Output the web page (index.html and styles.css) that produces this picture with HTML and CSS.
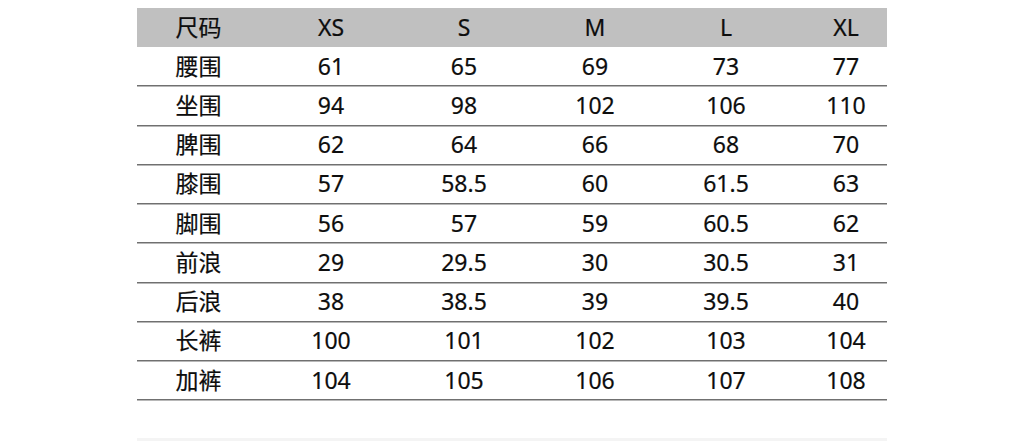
FILE: index.html
```html
<!DOCTYPE html>
<html lang="zh">
<head>
<meta charset="utf-8">
<link rel="stylesheet" href="styles.css">
</head>
<body>
<div class="sheet">
  <div class="table">
    <div class="row head"><div class="cell">尺码</div><div class="cell">XS</div><div class="cell">S</div><div class="cell">M</div><div class="cell">L</div><div class="cell">XL</div></div>
    <div class="row"><div class="cell">腰围</div><div class="cell">61</div><div class="cell">65</div><div class="cell">69</div><div class="cell">73</div><div class="cell">77</div></div>
    <div class="row"><div class="cell">坐围</div><div class="cell">94</div><div class="cell">98</div><div class="cell">102</div><div class="cell">106</div><div class="cell">110</div></div>
    <div class="row"><div class="cell">脾围</div><div class="cell">62</div><div class="cell">64</div><div class="cell">66</div><div class="cell">68</div><div class="cell">70</div></div>
    <div class="row"><div class="cell">膝围</div><div class="cell">57</div><div class="cell">58.5</div><div class="cell">60</div><div class="cell">61.5</div><div class="cell">63</div></div>
    <div class="row"><div class="cell">脚围</div><div class="cell">56</div><div class="cell">57</div><div class="cell">59</div><div class="cell">60.5</div><div class="cell">62</div></div>
    <div class="row"><div class="cell">前浪</div><div class="cell">29</div><div class="cell">29.5</div><div class="cell">30</div><div class="cell">30.5</div><div class="cell">31</div></div>
    <div class="row"><div class="cell">后浪</div><div class="cell">38</div><div class="cell">38.5</div><div class="cell">39</div><div class="cell">39.5</div><div class="cell">40</div></div>
    <div class="row"><div class="cell">长裤</div><div class="cell">100</div><div class="cell">101</div><div class="cell">102</div><div class="cell">103</div><div class="cell">104</div></div>
    <div class="row"><div class="cell">加裤</div><div class="cell">104</div><div class="cell">105</div><div class="cell">106</div><div class="cell">107</div><div class="cell">108</div></div>
  </div>
  <div class="fade"></div>
</div>
</body>
</html>
```
FILE: styles.css
```css
html, body {
  margin: 0;
  padding: 0;
  background: #ffffff;
}
.sheet {
  width: 750px;
  margin-left: 137px;
  padding-top: 8px;
}
.table {
  display: flex;
  flex-direction: column;
}
.row {
  display: grid;
  grid-template-columns: 123px 142px 124px 138px 124px 99px;
  height: 39.25px;
  box-sizing: border-box;
  border-bottom: 1px solid #707070;
  box-shadow: 0 1px 0 #b8b8b8;
  font-family: "Noto Sans", "Noto Sans CJK SC", sans-serif;
  font-size: 23px;
  color: #0d0d0d;
  -webkit-text-stroke: 0.2px #0d0d0d;
}
.row.head {
  height: 39px;
  background: #c0c0c0;
  border-bottom: none;
  box-shadow: none;
}
.cell {
  display: flex;
  align-items: center;
  justify-content: center;
  box-sizing: border-box;
  line-height: 1;
}
.cell:last-child {
  padding-left: 17px;
}
.fade {
  height: 3px;
  margin-top: 38px;
  background: #f4f4f4;
}
```
